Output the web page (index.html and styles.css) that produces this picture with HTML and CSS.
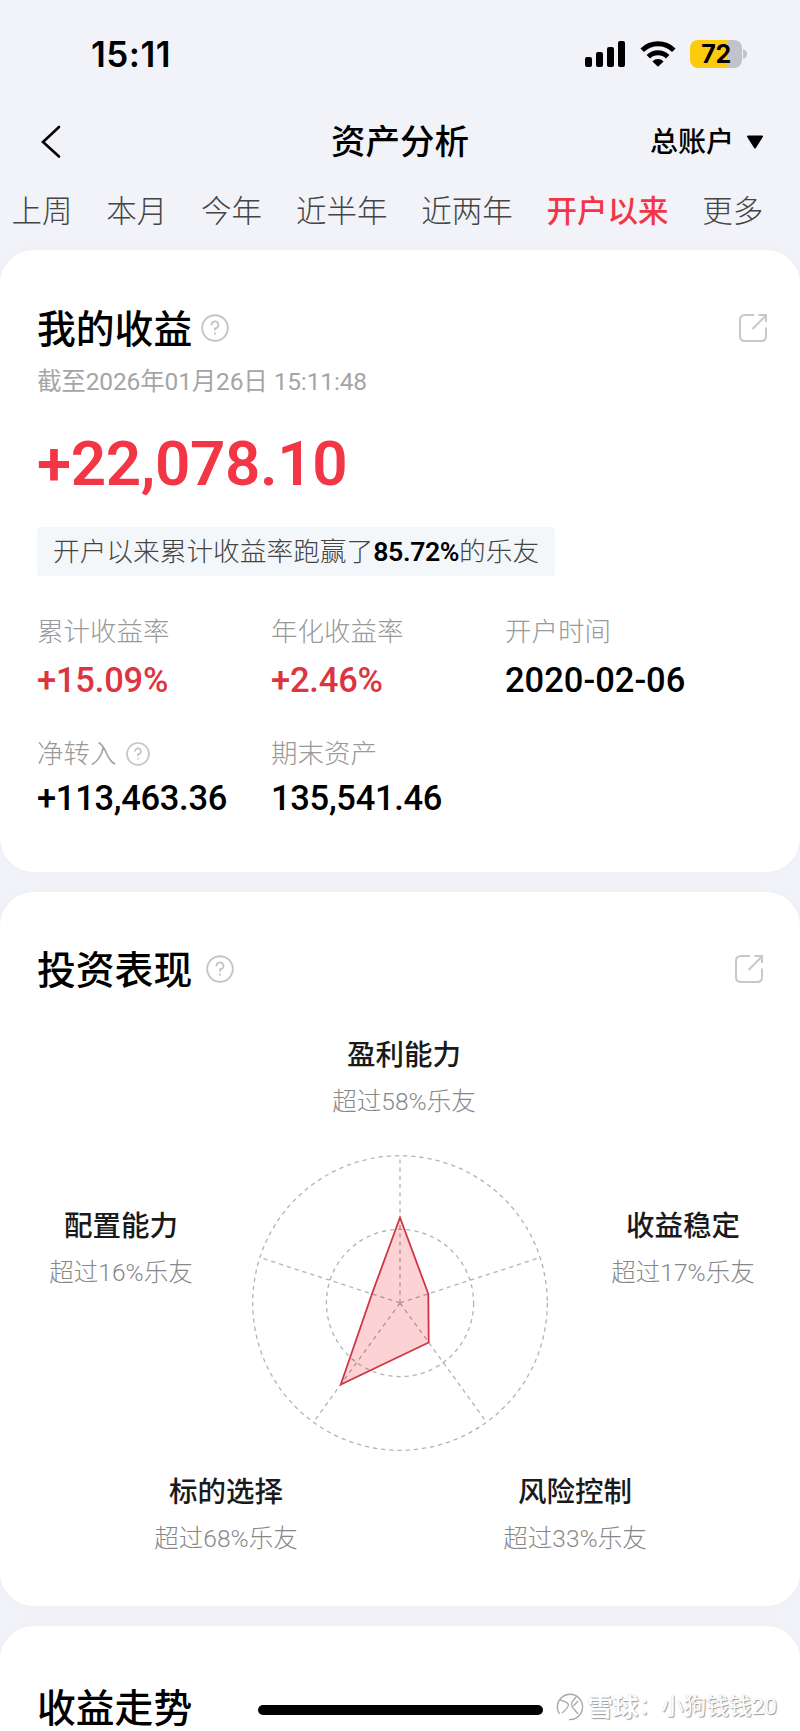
FILE: index.html
```html
<!DOCTYPE html>
<html lang="zh-CN">
<head>
  <meta charset="UTF-8">
  <meta name="viewport" content="width=device-width, initial-scale=1.0">
  <title>资产分析</title>
  <link rel="stylesheet" href="styles.css">
</head>
<body>
  <!-- 状态栏 -->
  <div class="status-bar">
    <span class="time">15:11</span>
    <div class="status-icons">
      <svg class="signal" width="41" height="26" viewBox="0 0 41 26">
        <rect x="0" y="16" width="7" height="10" rx="2"/>
        <rect x="11" y="11" width="7" height="15" rx="2"/>
        <rect x="22" y="6" width="7" height="20" rx="2"/>
        <rect x="33" y="0" width="7" height="26" rx="2"/>
      </svg>
      <svg class="wifi" width="36" height="26" viewBox="0 0 36 26">
        <path d="M2.2 9.2 A22.5 22.5 0 0 1 33.8 9.2" fill="none" stroke="#000" stroke-width="5"/>
        <path d="M8.3 15.8 A13.8 13.8 0 0 1 27.7 15.8" fill="none" stroke="#000" stroke-width="5"/>
        <path d="M18 25.8 L12.4 20.4 A7.6 7.6 0 0 1 23.6 20.4 Z"/>
      </svg>
      <div class="battery"><span>72</span></div>
      <svg width="4" height="10" viewBox="0 0 4 10"><path d="M0 0 Q4 1.5 4 5 T0 10 Z" fill="#c2c3c8"/></svg>
    </div>
  </div>

  <!-- 顶部导航 -->
  <header class="nav">
    <svg class="back" width="22" height="36" viewBox="0 0 22 36">
      <path d="M19 3 L3 18 L19 32.5" fill="none" stroke="#000" stroke-width="2.6" stroke-linecap="round"/>
    </svg>
    <h1>资产分析</h1>
    <div class="account">
      <span>总账户</span>
      <svg width="18" height="14" viewBox="0 0 18 14">
        <path d="M2 1.5 H16 L9 12.5 Z" fill="#000" stroke="#000" stroke-width="2" stroke-linejoin="round"/>
      </svg>
    </div>
  </header>

  <nav class="tabs">
    <span>上周</span>
    <span>本月</span>
    <span>今年</span>
    <span>近半年</span>
    <span>近两年</span>
    <span class="active">开户以来</span>
    <span>更多</span>
  </nav>

  <!-- 我的收益 -->
  <section class="card income">
    <div class="card-head">
      <h2>我的收益</h2>
      <svg class="help" width="28" height="28" viewBox="0 0 28 28">
        <circle cx="14" cy="14" r="12.8"/>
        <path d="M10.5 11.3 A3.5 3.5 0 1 1 14 14.4 V16.6 M14 18.6 V20.4"/>
      </svg>
      <svg class="share" width="30" height="30" viewBox="0 0 30 30">
        <path d="M16 2 H7 Q2 2 2 7 V23 Q2 28 7 28 H23 Q28 28 28 23 V14.5 M14.5 16 L27.5 3 M20.5 2 H28 V9"/>
      </svg>
    </div>
    <p class="date">截至2026年01月26日 15:11:48</p>
    <p class="total">+22,078.10</p>
    <p class="beat">开户以来累计收益率跑赢了<b>85.72%</b>的乐友</p>
    <div class="stats">
      <div class="stat">
        <div class="label">累计收益率</div>
        <div class="value red">+15.09%</div>
      </div>
      <div class="stat">
        <div class="label">年化收益率</div>
        <div class="value red">+2.46%</div>
      </div>
      <div class="stat">
        <div class="label">开户时间</div>
        <div class="value">2020-02-06</div>
      </div>
      <div class="stat">
        <div class="label">净转入
          <svg class="help" width="24" height="24" viewBox="0 0 28 28">
            <circle cx="14" cy="14" r="12.8"/>
            <path d="M10.5 11.3 A3.5 3.5 0 1 1 14 14.4 V16.6 M14 18.6 V20.4"/>
          </svg>
        </div>
        <div class="value amount">+113,463.36</div>
      </div>
      <div class="stat">
        <div class="label">期末资产</div>
        <div class="value amount">135,541.46</div>
      </div>
    </div>
  </section>

  <!-- 投资表现 -->
  <section class="card performance">
    <div class="card-head">
      <h2>投资表现</h2>
      <svg class="help" width="28" height="28" viewBox="0 0 28 28">
        <circle cx="14" cy="14" r="12.8"/>
        <path d="M10.5 11.3 A3.5 3.5 0 1 1 14 14.4 V16.6 M14 18.6 V20.4"/>
      </svg>
      <svg class="share" width="30" height="30" viewBox="0 0 30 30">
        <path d="M16 2 H7 Q2 2 2 7 V23 Q2 28 7 28 H23 Q28 28 28 23 V14.5 M14.5 16 L27.5 3 M20.5 2 H28 V9"/>
      </svg>
    </div>

    <div class="ability top">
      <h3>盈利能力</h3>
      <p>超过58%乐友</p>
    </div>
    <div class="radar-row">
      <div class="ability">
        <h3>配置能力</h3>
        <p>超过16%乐友</p>
      </div>
      <svg class="radar" width="300" height="300" viewBox="-150 -150 300 300">
        <polygon class="area" points="0,-85.5 28.3,-9.2 28.7,39.5 -59.2,81.5 -28,-9.2"/>
        <g class="grid">
          <circle r="147.3"/>
          <circle r="73.6"/>
          <path d="M0 0 V-147 M0 0 L139.8 -45.4 M0 0 L86.4 118.9 M0 0 L-86.4 118.9 M0 0 L-139.8 -45.4"/>
        </g>
        <polygon class="outline" points="0,-85.5 28.3,-9.2 28.7,39.5 -59.2,81.5 -28,-9.2"/>
      </svg>
      <div class="ability">
        <h3>收益稳定</h3>
        <p>超过17%乐友</p>
      </div>
    </div>
    <div class="bottom-row">
      <div class="ability">
        <h3>标的选择</h3>
        <p>超过68%乐友</p>
      </div>
      <div class="ability">
        <h3>风险控制</h3>
        <p>超过33%乐友</p>
      </div>
    </div>
  </section>

  <!-- 收益走势 -->
  <section class="card trend">
    <div class="card-head">
      <h2>收益走势</h2>
    </div>
  </section>

  <div class="home-indicator"></div>
  <div class="watermark">
    <svg width="28" height="28" viewBox="0 0 28 28">
      <g fill="none" stroke="#a9a9a9" stroke-width="1.3">
        <path d="M3.6 21 A12.6 12.6 0 1 1 24 21.5 Q20 27 13 26.6"/>
        <path d="M4 7 Q12 9 12.5 12 Q12 15 6 20 M20 4 L16 9 Q14.5 13 18 16 L22 21 M22 8 L17.5 13"/>
      </g>
    </svg>
    <b>雪球</b><span class="colon">：</span><span>小狗钱钱20</span>
  </div>
</body>
</html>
```
FILE: styles.css
```css
:root {
  --red: #f23645;
  --red-dark: #dd3442;
  --page-bg: #f2f3f8;
}

* {
  box-sizing: border-box;
}

body {
  margin: 0;
  height: 1731px;
  overflow: hidden;
  position: relative;
  background: var(--page-bg);
  color: #000;
  font-family: Roboto, "Noto Sans CJK SC", sans-serif;
}

h1, h2, h3, p {
  margin: 0;
}

svg {
  display: block;
  flex: none;
}

/* 状态栏 */
.status-bar {
  height: 107px;
  padding: 0 53px 0 91px;
  display: flex;
  align-items: center;
  justify-content: space-between;
}

.time {
  font-family: Inter, sans-serif;
  font-size: 35px;
  font-weight: 600;
  letter-spacing: 0.5px;
}

.status-icons {
  display: flex;
  align-items: center;
}

.wifi {
  margin: 0 14px 0 14px;
}

.battery {
  width: 52px;
  height: 28px;
  margin-right: 1px;
  border-radius: 8px;
  background: linear-gradient(to right, #fdcb0e 73%, #c2c3c8 73%);
  font: 700 25px/28px Inter, sans-serif;
  text-align: center;
  letter-spacing: -0.5px;
}

/* 顶部导航 */
.nav {
  height: 70px;
  padding: 0 36px 0 40px;
  display: grid;
  grid-template-columns: 1fr auto 1fr;
  align-items: center;
}

.nav h1 {
  position: relative;
  left: -2px;
  font-size: 34.5px;
  font-weight: 500;
  line-height: 48px;
}

.account {
  display: flex;
  align-items: center;
  justify-content: flex-end;
  gap: 12px;
  font-size: 28px;
  font-weight: 500;
  line-height: 40px;
}

.account span {
  padding-top: 2px;
}

.tabs {
  height: 73px;
  padding: 12px 0 0 11.5px;
  display: flex;
  gap: 33.8px;
  font-size: 30.5px;
  font-weight: 300;
  line-height: 46px;
  white-space: nowrap;
  color: #444;
}

.tabs .active {
  color: var(--red);
  font-weight: 500;
}

/* 卡片 */
.card {
  margin-bottom: 20px;
  padding: 0 37px;
  border-radius: 34px;
  background: #fff;
  box-shadow: 0 0 16px rgba(0, 0, 0, 0.025);
}

.card-head {
  display: flex;
  align-items: center;
  height: 56px;
}

.card-head h2 {
  padding-top: 3px;
  font-size: 38.8px;
  font-weight: 500;
  line-height: 56px;
}

.help {
  fill: none;
  stroke: #c4c4c4;
  stroke-width: 1.9;
}

.card-head .help {
  margin-left: 9px;
}

.share {
  margin-left: auto;
  margin-right: -5px;
  fill: none;
  stroke: #c8c8c8;
  stroke-width: 2;
}

.income {
  height: 622px;
  padding-top: 50px;
}

.date {
  margin-top: 8px;
  font-size: 24.5px;
  line-height: 36px;
  letter-spacing: -0.15px;
  color: #a5a5a5;
}

.total {
  margin-top: 24px;
  font-size: 62px;
  font-weight: 600;
  line-height: 80px;
  letter-spacing: -0.4px;
  color: var(--red);
}

.beat {
  width: 518px;
  height: 49px;
  margin-top: 23px;
  padding-left: 16px;
  border-radius: 3px;
  background: #f4f7fa;
  font-size: 26.7px;
  font-weight: 300;
  line-height: 50px;
  white-space: nowrap;
  color: #444;
}

.beat b {
  font-weight: 600;
  letter-spacing: -0.4px;
  color: #000;
}

.stats {
  margin-top: 37px;
  display: grid;
  grid-template-columns: repeat(3, 234px);
  row-gap: 33px;
}

.label {
  display: flex;
  align-items: center;
  gap: 9px;
  font-size: 26.5px;
  font-weight: 300;
  line-height: 38px;
  color: #999;
}

.value {
  margin-top: 7px;
  font-size: 34.5px;
  font-weight: 500;
  line-height: 44px;
}

.value.red {
  letter-spacing: -0.2px;
  color: var(--red-dark);
}

.value.amount {
  margin-top: 3px;
  letter-spacing: -0.3px;
}

/* 雷达图 */
.performance {
  height: 714px;
  padding-top: 49px;
}

.performance .card-head .help {
  margin-left: 14px;
}

.performance .share {
  margin-right: -1px;
}

.ability {
  width: 170px;
  text-align: center;
  white-space: nowrap;
}

.ability h3 {
  font-size: 28.5px;
  font-weight: 500;
  line-height: 40px;
  color: #1a1a1a;
}

.ability p {
  margin-top: 8px;
  font-size: 24.5px;
  font-weight: 300;
  line-height: 36px;
  color: #888;
}

.ability.top {
  margin: 39px auto 0;
  position: relative;
  left: 4px;
}

.radar-row {
  margin: 33px -5px 0 -1px;
  display: flex;
}

.radar-row .ability {
  padding-top: 54px;
}

.radar {
  margin: 0 48px 0 44px;
}

.bottom-row {
  margin-top: 20px;
  padding: 0 103px 0 104px;
  display: flex;
  justify-content: space-between;
}

.radar .grid {
  fill: none;
  stroke: #000;
  stroke-opacity: 0.3;
  stroke-width: 1.3;
  stroke-dasharray: 4.2 4;
}

.radar .area {
  fill: #fdd2d5;
}

.radar .outline {
  fill: none;
  stroke: #d03545;
  stroke-width: 1.8;
}

.trend {
  height: 140px;
  padding-top: 53px;
}

/* 底部悬浮元素 */
.home-indicator {
  position: absolute;
  left: 258px;
  bottom: 16px;
  width: 285px;
  height: 10px;
  border-radius: 5px;
  background: #000;
}

.watermark {
  position: absolute;
  right: 23px;
  bottom: 6px;
  display: flex;
  align-items: center;
  font-size: 22.6px;
  font-weight: 400;
  line-height: 36px;
  color: #fff;
  text-shadow: 1px 1px 1px #999, 0 0 1px #ccc;
}

.watermark b {
  margin-left: 4px;
  font-size: 25.5px;
  font-weight: 700;
}
```
